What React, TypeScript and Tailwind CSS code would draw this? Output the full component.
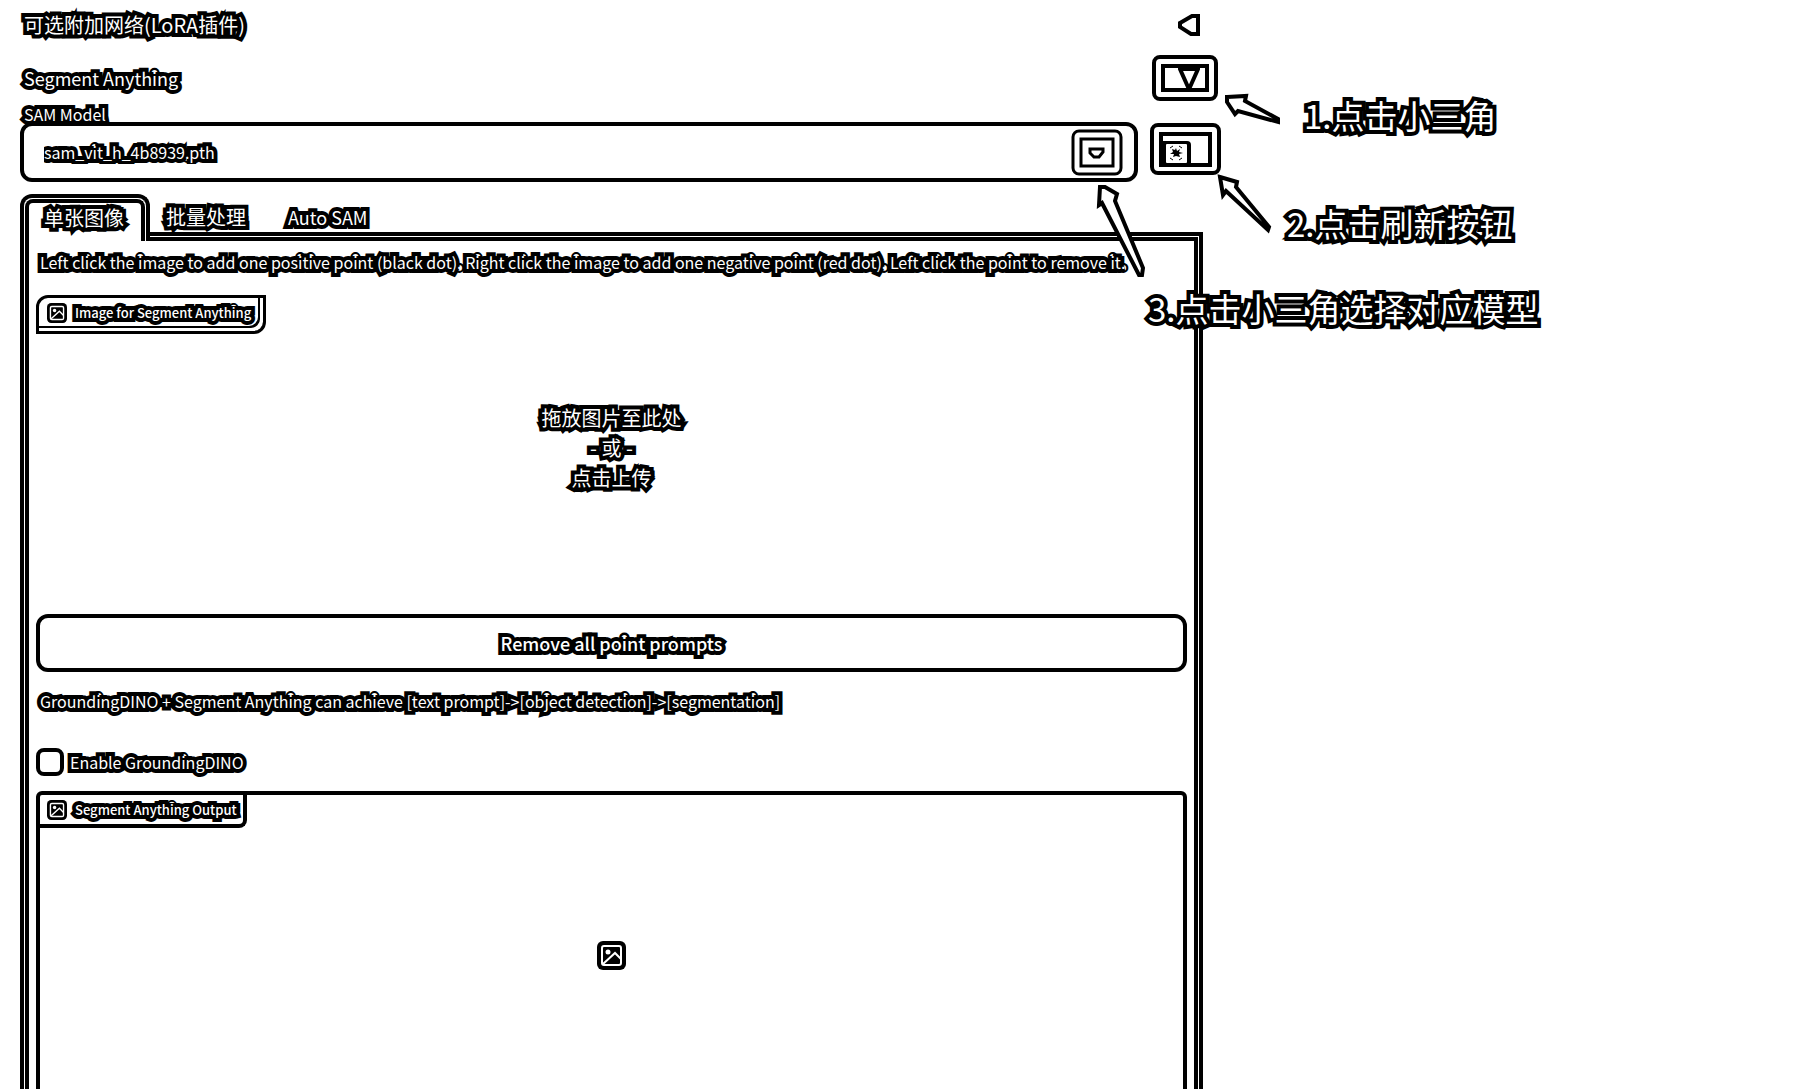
import React from "react";

function ImageIcon({ size }: { size: number }) {
  return (
    <svg width={size} height={size} viewBox="0 0 29 29" aria-hidden="true" className="shrink-0 [paint-order:normal]">
      <rect x="0" y="0" width="29" height="29" rx="6" fill="#000" />
      <rect x="5" y="5" width="19" height="19" rx="2" fill="none" stroke="#fff" strokeWidth="2" />
      <circle cx="11" cy="11" r="2.5" fill="#fff" />
      <path d="M6 23 L18 12 L24 18" fill="none" stroke="#fff" strokeWidth="2" />
    </svg>
  );
}

function SectionHeader({ title, open, className }: { title: string; open: boolean; className: string }) {
  return (
    <button
      type="button"
      aria-expanded={open}
      className={"flex w-full items-center justify-between pl-1 pr-[3px] text-left " + className}
    >
      <span>{title}</span>
      <svg
        width="22"
        height="22"
        viewBox="0 0 22 22"
        fill="#fff"
        stroke="#000"
        strokeWidth="4"
        aria-hidden="true"
        className="[paint-order:normal]"
      >
        {open ? <polygon points="2,2 20,2 12,20 10,20" /> : <polygon points="2,9 14,2 20,2 20,20 13,20 2,13" />}
      </svg>
    </button>
  );
}

function Annotations() {
  return (
    <aside className="pointer-events-none relative w-[597px] shrink-0 text-[33px] leading-10">
      <svg
        className="absolute -left-[143px] top-0 [paint-order:normal]"
        width="260"
        height="300"
        viewBox="1060 0 260 300"
        fill="none"
        stroke="#000"
        strokeWidth="4"
        aria-hidden="true"
      >
        <rect x="1154" y="57" width="62" height="42" rx="6" />
        <rect x="1163" y="66" width="44" height="24" />
        <rect x="1152" y="125" width="67" height="48" rx="6" />
        <rect x="1161" y="134" width="49" height="31" />
        <rect x="1073" y="131" width="48" height="43" rx="6" strokeWidth="3" />
        <rect x="1081" y="139" width="32" height="27" strokeWidth="3" />
        <g fill="#fff">
          <polygon points="1227,97 1246,96 1245,101 1278,119 1278,122 1238,111 1235,114 1227,102" />
          <polygon points="1220,177 1237,182 1236,187 1269,227 1268,230 1226,191 1223,195" />
          <polygon points="1100,187 1105,187 1117,194 1115,201 1143,268 1142,275 1139,275 1102,203 1099,205" />
        </g>
      </svg>
      <p className="absolute left-[101px] top-[95px] whitespace-nowrap">1.点击小三角</p>
      <p className="absolute left-[84px] top-[203px] whitespace-nowrap">2.点击刷新按钮</p>
      <p className="absolute -left-[55px] top-[288px] whitespace-nowrap">3.点击小三角选择对应模型</p>
    </aside>
  );
}

export default function App() {
  return (
    <div className="flex h-screen overflow-hidden bg-white font-['Noto_Sans_CJK_SC',sans-serif] text-white [-webkit-text-stroke:8px_#000] [paint-order:stroke_fill] [stroke-linejoin:miter]">
      <main className="flex min-w-0 flex-1 flex-col pl-5">
        <SectionHeader title="可选附加网络(LoRA插件)" open={false} className="h-[50px] shrink-0 text-xl" />
        <SectionHeader title="Segment Anything" open className="h-14 shrink-0 text-lg" />

        <label htmlFor="sam-model" className="relative z-10 h-4 shrink-0 self-start pl-1 text-base leading-4">
          SAM Model
        </label>
        <div className="flex h-[60px] shrink-0">
          <div className="relative flex-1">
            <select
              id="sam-model"
              className="h-full w-full appearance-none rounded-xl border-4 border-black bg-white pl-5 text-base"
            >
              <option>sam_vit_h_4b8939.pth</option>
            </select>
            <svg
              className="absolute right-[33px] top-6 [paint-order:normal]"
              width="17"
              height="14"
              viewBox="0 0 17 14"
              aria-hidden="true"
            >
              <path d="M2 3 H15 V6 L11 11 H6 L2 7 Z" fill="#fff" stroke="#000" strokeWidth="3" />
            </svg>
          </div>
          <button type="button" aria-label="Refresh" className="flex w-[65px] items-center pl-[25px]">
            <svg width="28" height="27" viewBox="0 0 28 27" aria-hidden="true" className="[paint-order:normal]">
              <path d="M0 27 V2 H24 Q28 2 28 6 V27" fill="#000" />
              <rect x="3" y="5" width="21" height="19" rx="1" fill="#fff" />
              <path d="M7 9 l3 -2 M16 7 l3 2 M7 19 l3 2 M16 21 l3 -2" stroke="#000" strokeWidth="1" />
              <path d="M13 9 l1 3 3 -2 -1 3 4 1 -4 1 1 3 -4 -1 -3 1 1 -3 -4 0 3 -2 -1 -3 3 1z" fill="#000" />
            </svg>
          </button>
        </div>

        <div role="tablist" className="relative z-10 mt-3 -mb-[9px] flex h-[47px] shrink-0 text-xl">
          <div className="w-[130px] rounded-t-xl border-4 border-b-0 border-black bg-white px-px pt-px">
            <button
              type="button"
              role="tab"
              aria-selected="true"
              className="h-full w-full rounded-t-lg border-4 border-b-0 border-black pb-2 pr-0.5 leading-7"
            >
              单张图像
            </button>
          </div>
          <button type="button" role="tab" aria-selected="false" className="h-[47px] pl-4 pb-px leading-7">
            批量处理
          </button>
          <button type="button" role="tab" aria-selected="false" className="h-[47px] pl-[42px] pb-px text-lg leading-7">
            Auto SAM
          </button>
        </div>

        <section className="flex flex-1 flex-col border-4 border-b-0 border-black px-3 shadow-[inset_0_0_0_1px_#fff,inset_0_0_0_5px_#000]">
          <p className="mt-4 h-[43px] shrink-0 whitespace-nowrap pl-1 text-base leading-[20px]">
            Left click the image to add one positive point (black dot). Right click the image to add one negative point
            (red dot). Left click the point to remove it.
          </p>

          <div className="flex h-[319px] shrink-0 flex-col">
            <div className="flex h-[39px] w-[230px] items-center gap-2 self-start whitespace-nowrap rounded-tl-xl rounded-br-xl border-[3px] border-black pb-1 pl-2 text-[13px] font-medium shadow-[inset_-3px_-3px_0_0_#fff,inset_-5px_-5px_0_0_#000]">
              <ImageIcon size={20} />
              <span>Image for Segment Anything</span>
            </div>
            <div className="mt-[69px] text-center text-xl leading-[30px]">
              <p>拖放图片至此处</p>
              <p>- 或 -</p>
              <p>点击上传</p>
            </div>
          </div>

          <button
            type="button"
            className="h-[58px] shrink-0 rounded-xl border-4 border-black text-lg font-medium leading-6"
          >
            Remove all point prompts
          </button>

          <p className="mt-[19px] h-[57px] shrink-0 whitespace-nowrap pl-1 text-base leading-[20px]">
            GroundingDINO + Segment Anything can achieve [text prompt]-&gt;[object detection]-&gt;[segmentation]
          </p>

          <label className="flex h-7 shrink-0 items-center gap-1.5 self-start text-base">
            <input type="checkbox" className="h-7 w-7 appearance-none rounded-lg border-4 border-black bg-white" />
            Enable GroundingDINO
          </label>

          <div className="relative mt-[15px] flex h-[328px] shrink-0 items-center justify-center rounded-t-md border-4 border-black">
            <div className="absolute -left-[3px] -top-[3px] flex h-9 w-[210px] items-center gap-2 whitespace-nowrap rounded-tl-md rounded-br-lg border-r-4 border-b-4 border-black pl-2.5 pt-1 text-[13px] font-medium">
              <ImageIcon size={20} />
              <span>Segment Anything Output</span>
            </div>
            <ImageIcon size={29} />
          </div>
        </section>
      </main>
      <Annotations />
    </div>
  );
}
